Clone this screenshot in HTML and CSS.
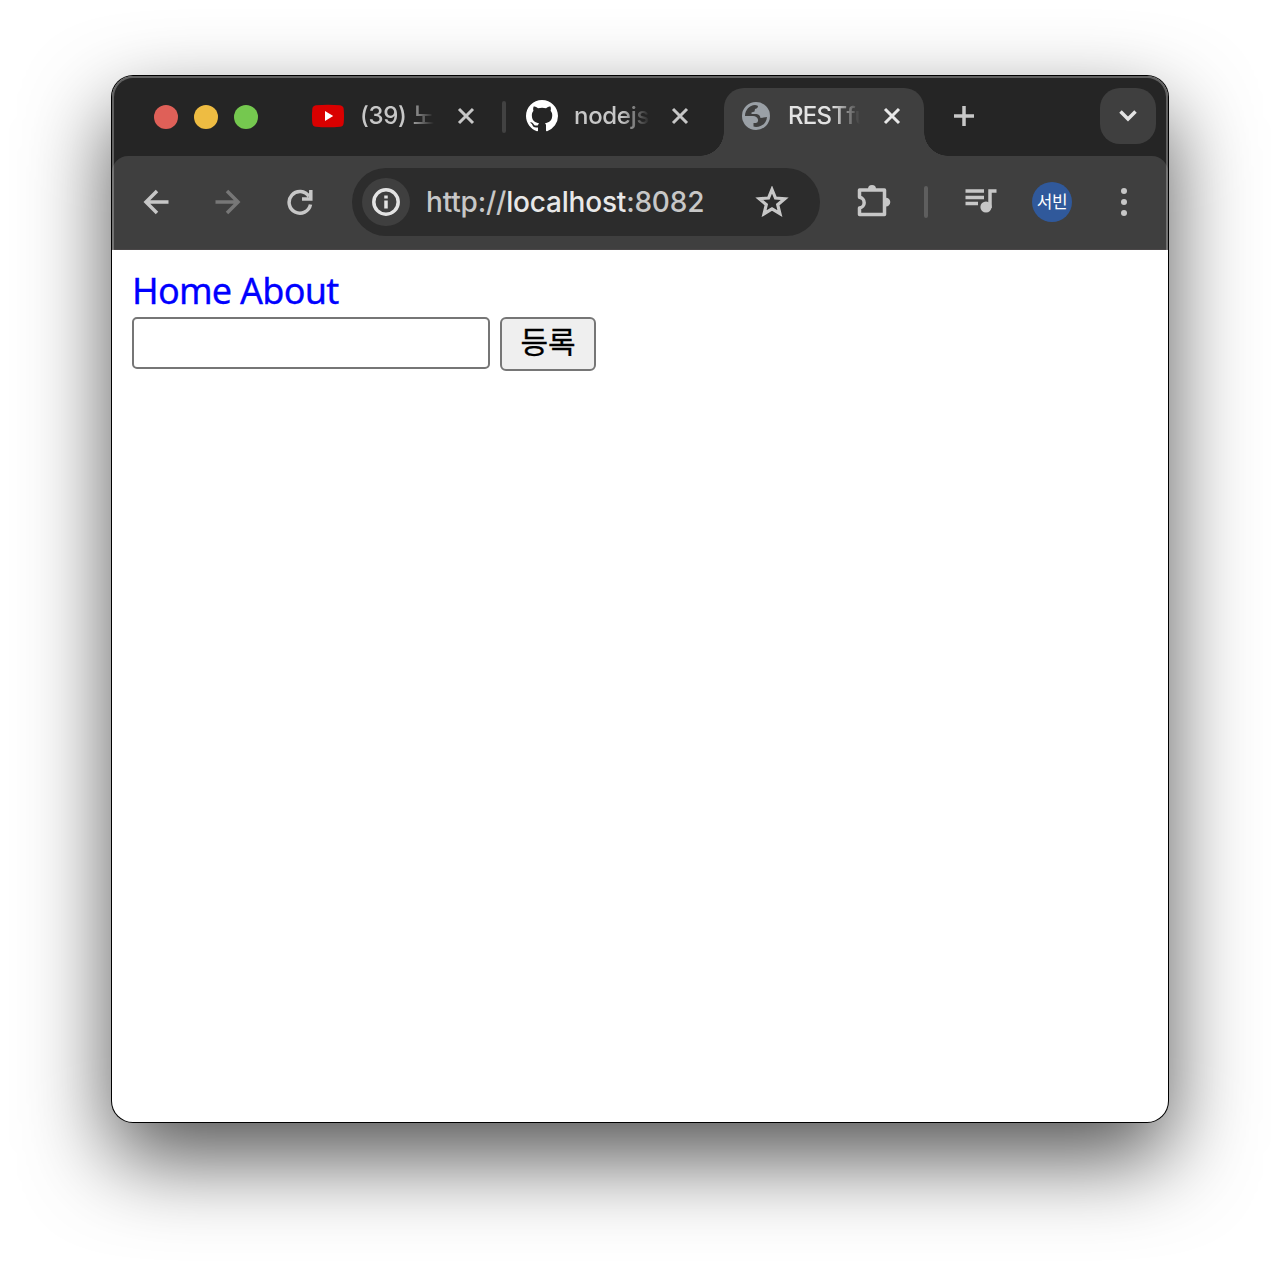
FILE: index.html
```html
<!DOCTYPE html>
<html lang="ko">
<head>
<meta charset="utf-8">
<title>RESTful</title>
<link rel="stylesheet" href="styles.css">
</head>
<body>
<div class="window">
  <header class="chrome">
    <div class="tabstrip">
      <div class="lights"><i class="light red"></i><i class="light yellow"></i><i class="light green"></i></div>
      <div class="tab tab-video">
        <svg width="32" height="24" viewBox="0 0 32 24"><path fill="#d90000" d="M4 1.2Q16 .2 28 1.2Q31.4 1.6 31.7 5Q32.3 12 31.7 19Q31.4 22.4 28 22.8Q16 23.8 4 22.8Q.6 22.4.3 19Q-.3 12 .3 5Q.6 1.6 4 1.2Z"/><path fill="#fff" d="M13 7l8.2 5-8.2 5z"/></svg>
        <span class="title">(39) 노</span>
        <svg class="close" width="18" height="18" viewBox="0 0 18 18"><path d="M2 2l14 14M16 2L2 16"/></svg>
      </div>
      <i class="divider"></i>
      <div class="tab tab-code">
        <svg width="32" height="32" viewBox="0 0 16 16"><path fill="#fff" d="M8 0C3.58 0 0 3.58 0 8c0 3.54 2.29 6.53 5.47 7.59.4.07.55-.17.55-.38 0-.19-.01-.82-.01-1.49-2.01.37-2.53-.49-2.69-.94-.09-.23-.48-.94-.82-1.13-.28-.15-.68-.52-.01-.53.63-.01 1.08.58 1.23.82.72 1.21 1.87.87 2.33.66.07-.52.28-.87.51-1.07-1.78-.2-3.64-.89-3.64-3.95 0-.87.31-1.59.82-2.15-.08-.2-.36-1.02.08-2.12 0 0 .67-.21 2.2.82.64-.18 1.32-.27 2-.27s1.36.09 2 .27c1.53-1.04 2.2-.82 2.2-.82.44 1.1.16 1.92.08 2.12.51.56.82 1.27.82 2.15 0 3.07-1.87 3.75-3.65 3.95.29.25.54.73.54 1.48 0 1.07-.01 1.93-.01 2.2 0 .21.15.46.55.38A8.01 8.01 0 0016 8c0-4.42-3.58-8-8-8z"/></svg>
        <span class="title">nodejs</span>
        <svg class="close" width="18" height="18" viewBox="0 0 18 18"><path d="M2 2l14 14M16 2L2 16"/></svg>
      </div>
      <div class="tab tab-active">
        <svg width="28" height="28" viewBox="0 0 28 28"><circle cx="14" cy="14" r="14" fill="#9aa0a6"/><path fill="#3f3f3f" d="M3 14C3 8 7.500 3.200 13 3Q16 3 16 4.800Q15.500 6.500 13 7L12.500 9.500L9.500 10.500V12H14.500Q18 12.500 18.500 16L25 15C24.500 21 20 25 14 25L11.500 24.500V21H14Q16.500 20.500 16 17.500Q15 14 11 14Z"/></svg>
        <span class="title">RESTfu</span>
        <svg class="close" width="18" height="18" viewBox="0 0 18 18"><path d="M2 2l14 14M16 2L2 16"/></svg>
      </div>
      <svg class="plus" width="20" height="20" viewBox="0 0 20 20"><path d="M10 0v20M0 10h20"/></svg>
      <div class="tab-search"><svg width="18" height="12" viewBox="0 0 18 12"><path d="M1.500 1.500L9 9l7.500-7.500"/></svg></div>
    </div>
    <div class="toolbar">
      <svg class="back" width="26" height="26" viewBox="0 0 26 26"><path d="M25.500 13H3.500M14 2L3 13l11 11"/></svg>
      <svg class="forward" width="26" height="26" viewBox="0 0 26 26"><path d="M.5 13h22M12 2l11 11-11 11"/></svg>
      <svg class="reload" width="26" height="26" viewBox="0 0 26 26"><path d="M22 7.500A10.800 10.800 0 1 0 23.500 15.500M23.800 1v9H15"/></svg>
      <div class="omnibox">
        <div class="info"><svg width="28" height="28" viewBox="0 0 28 28"><circle cx="14" cy="14" r="12.200"/><path d="M14 12.500v8M14 7.500v3"/></svg></div>
        <div class="url">http://<b>localhost</b>:8082</div>
        <svg class="star" width="34" height="32" viewBox="0 0 34 32"><path d="M17 3.500l3.500 8.500 9.200.7-7 6 2.200 9-7.900-4.900-7.900 4.900 2.200-9-7-6 9.200-.7z"/></svg>
      </div>
      <svg class="puzzle" width="36" height="36" viewBox="0 0 36 36"><path fill="none" stroke="#c7c7c7" stroke-width="3.500" stroke-linejoin="round" d="M3.500 6H28.500V30.500H3.500V24A5.400 5.400 0 0 0 3.500 13.300z"/><path fill="#c7c7c7" d="M12 5a4 4 0 0 1 8 0zM30 13.800a4.300 4.300 0 0 1 0 8.600z"/></svg>
      <i class="divider toolbar-divider"></i>
      <svg class="media" width="32" height="28" viewBox="0 0 32 28"><path fill="none" stroke="#c7c7c7" stroke-width="3.500" d="M.5 3H19M.5 9.500H19M.5 15.600H13M31.500 3H25v17"/><circle cx="21" cy="19" r="5.600" fill="#c7c7c7"/></svg>
      <div class="avatar">서빈</div>
      <svg class="menu" width="6" height="30" viewBox="0 0 6 30"><circle cx="3" cy="4" r="3"/><circle cx="3" cy="15" r="3"/><circle cx="3" cy="26" r="3"/></svg>
    </div>
  </header>
  <main class="page">
    <nav class="nav"><a>Home</a> <a>About</a></nav>
    <form class="form"><input class="field" type="text"><button class="submit" type="button">등록</button></form>
  </main>
</div>
</body>
</html>
```
FILE: styles.css
```css
* { box-sizing: border-box; }
body { margin: 0; padding: 76px 112px 148px; background: #fff; overflow: hidden; }
svg { display: block; flex: none; }
.window { height: 1046px; border-radius: 21px; background: #fff; box-shadow: 0 0 0 1px #000, 0 36px 86px rgba(0,0,0,.68); overflow: hidden; }
.chrome { position: relative; height: 174px; background: #252525; font-family: Inter, "Noto Sans CJK KR", sans-serif; }
/* light rim running round the title bar */
.chrome::after { content: ""; position: absolute; inset: 0; border: 2px solid rgba(255,255,255,.28); border-bottom: 0; border-radius: 21px 21px 0 0; pointer-events: none; }
.tabstrip { height: 80px; display: flex; align-items: center; }
.lights { display: flex; gap: 16px; margin: 2px 54px 0 42px; }
.light { width: 24px; height: 24px; border-radius: 50%; }
.red { background: #df6058; }
.yellow { background: #eebc42; }
.green { background: #75c84f; }
.tab { display: flex; align-items: center; height: 68px; margin-top: 12px; padding-bottom: 12px; font-size: 24px; font-weight: 500; color: #c7c7c7; }
.title { overflow: hidden; white-space: nowrap; line-height: 40px; letter-spacing: -.3px; -webkit-mask-image: linear-gradient(90deg, #000 62%, transparent 100%); }
.close { fill: none; stroke: #c7c7c7; stroke-width: 3; }
.tab-video { width: 190px; }
.tab-video .title { width: 74px; margin: 0 23px 0 16px; }
.divider { width: 4px; height: 32px; border-radius: 2px; background: #424242; margin-top: 2px; }
.tab-code { width: 198px; margin-left: 20px; }
.tab-code .title { width: 76px; margin: 0 21px 0 16px; }
.tab-active { position: relative; width: 200px; padding-left: 18px; border-radius: 20px 20px 0 0; background: #3f3f3f; }
.tab-active::before, .tab-active::after { content: ""; position: absolute; bottom: 0; width: 24px; height: 24px; }
.tab-active::before { left: -24px; background: radial-gradient(circle at 0 0, transparent 23.500px, #3f3f3f 24px); }
.tab-active::after { right: -24px; background: radial-gradient(circle at 100% 0, transparent 23.500px, #3f3f3f 24px); }
.tab-active .title { width: 72px; margin: 0 23px 0 18px; color: #e3e3e3; letter-spacing: -.7px; }
.tab-active .close { stroke: #e8e8e8; }
.plus { margin-left: 30px; fill: none; stroke: #c7c7c7; stroke-width: 3.500; }
.tab-search { width: 56px; height: 56px; margin-left: auto; margin-right: 12px; border-radius: 20px; background: #3f3f3f; display: grid; place-items: center; }
.tab-search svg { fill: none; stroke: #e3e3e3; stroke-width: 3.500; }
.toolbar { height: 94px; padding: 0 0 2px 31px; display: flex; align-items: center; background: #3f3f3f; border-radius: 16px 16px 0 0; box-shadow: inset 0 -1px #4a4748; }
.back, .forward, .reload { fill: none; stroke: #c7c7c7; stroke-width: 3.500; }
.forward { margin-left: 46px; stroke: #777; }
.reload { margin-left: 46px; }
.omnibox { width: 468px; height: 68px; margin-left: 39px; padding: 0 31px 0 10px; border-radius: 34px; display: flex; align-items: center; background: #2c2c2c; }
.info { width: 48px; height: 48px; border-radius: 50%; background: #3f3f3f; display: grid; place-items: center; }
.info svg { fill: none; stroke: #e3e3e3; stroke-width: 3.500; }
.url { flex: 1; margin-left: 16px; font-size: 28px; font-weight: 500; letter-spacing: -.2px; white-space: nowrap; color: #c7c7c7; }
.url b { font-weight: 500; color: #e8e8e8; }
.star { fill: none; stroke: #c7c7c7; stroke-width: 3.200; }
.puzzle { margin-left: 36px; }
.toolbar-divider { margin: 0 0 0 32px; background: #5e5e5e; }
.media { margin-left: 37px; }
.avatar { width: 40px; height: 40px; margin-left: 35px; border-radius: 50%; background: #30599b; color: #fff; font: 17px/38px "Noto Sans CJK KR", sans-serif; letter-spacing: -.5px; text-align: center; white-space: nowrap; }
.menu { margin-left: 49px; fill: #c7c7c7; }
.page { padding: 18px 20px; }
.nav { height: 49px; font: 36px/45px "Noto Sans", sans-serif; letter-spacing: -.75px; color: #00f; -webkit-text-stroke: .3px #00f; white-space: nowrap; }
.form { display: flex; gap: 10px; }
.field { width: 358px; height: 52px; margin: 0; border: 2px solid #767676; border-radius: 5px; background: #fff; }
.submit { width: 96px; height: 54px; padding: 0 0 8px; border: 2px solid #767676; border-radius: 6px; background: #efefef; color: #000; font: 30px/42px "Noto Sans CJK KR", sans-serif; -webkit-text-stroke: .3px #000; }
```
